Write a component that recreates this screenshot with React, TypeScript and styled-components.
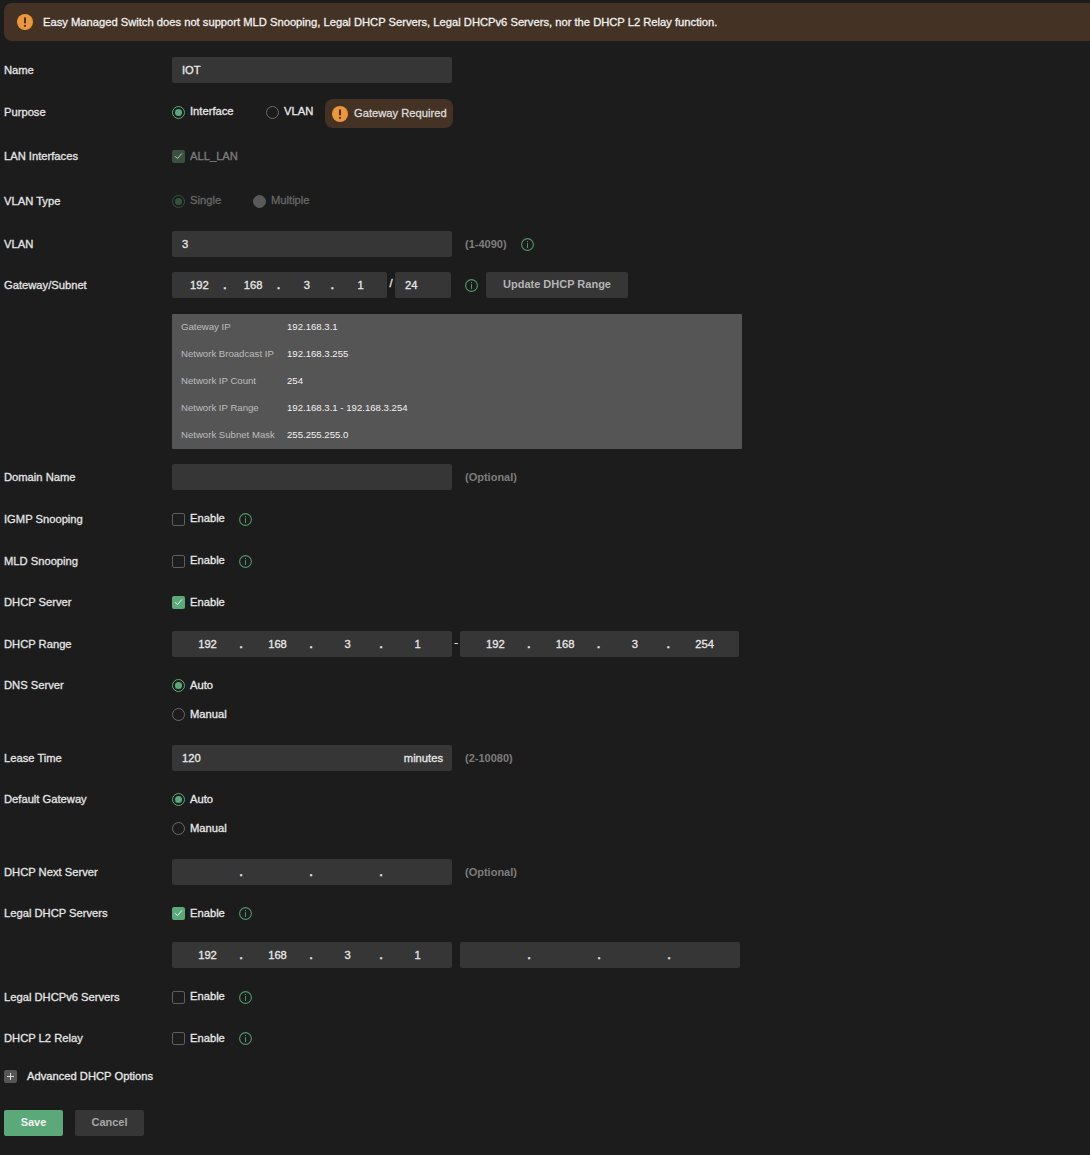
import React from "react";
import styled, { createGlobalStyle } from "styled-components";

const Global = createGlobalStyle`
  html, body { margin: 0; padding: 0; background: #1c1c1c; }
  body { font-family: "Liberation Sans", Arial, sans-serif; font-size: 11.2px; font-weight: 400; -webkit-text-stroke: 0.3px currentColor; color: #e8e8e8; overflow: hidden; }
`;

const Page = styled.div`
  width: 1090px;
  height: 1155px;
  padding: 3px 0 0 4px;
  box-sizing: border-box;
  overflow: hidden;
`;

const Banner = styled.div`
  display: flex;
  align-items: center;
  gap: 10px;
  height: 38px;
  width: 1100px;
  padding-left: 13px;
  box-sizing: border-box;
  background: #443324;
  border-radius: 8px;
  color: #f0f0f0;
  margin-bottom: 8px;
`;

const Row = styled.div<{ $h: number }>`
  display: flex;
  align-items: center;
  height: ${(p) => p.$h}px;
`;

const Label = styled.div`
  width: 168px;
  flex: none;
  color: #e4e4e4;
`;

const Controls = styled.div`
  display: flex;
  align-items: center;
`;

const TextBox = styled.div<{ $w?: number }>`
  display: flex;
  align-items: center;
  justify-content: space-between;
  width: ${(p) => p.$w ?? 280}px;
  height: 26px;
  padding: 0 9px 0 10px;
  box-sizing: border-box;
  background: #363636;
  border-radius: 2px;
  color: #e8e8e8;
`;

const IpBox = styled.div<{ $w: number }>`
  display: grid;
  grid-template-columns: 1fr 0 1fr 0 1fr 0 1fr;
  align-items: center;
  width: ${(p) => p.$w}px;
  height: 26px;
  box-sizing: border-box;
  background: #363636;
  border-radius: 2px;
  color: #e8e8e8;
`;

const Octet = styled.span`
  text-align: center;
  padding-left: 1px;
`;

const Dot = styled.span`
  width: 0;
  margin-left: -2.5px;
  font-weight: 700;
`;

const Sep = styled.span<{ $w: number }>`
  width: ${(p) => p.$w}px;
  text-align: center;
  color: #e8e8e8;
  margin-top: -4px;
`;

const Hint = styled.span<{ $ml?: number }>`
  color: #7d7d7d;
  font-size: 11px;
  font-weight: 700;
  -webkit-text-stroke: 0;
  margin-left: ${(p) => p.$ml ?? 13}px;
`;

const RadioMark = styled.span<{ $on?: boolean; $off?: boolean }>`
  display: inline-flex;
  align-items: center;
  justify-content: center;
  width: 13px;
  height: 13px;
  box-sizing: border-box;
  border-radius: 50%;
  border: 1px solid ${(p) => (p.$off ? (p.$on ? "#35523f" : "#5a5a5a") : p.$on ? "#5ba878" : "#6a6a6a")};
  background: ${(p) => (p.$off && !p.$on ? "#5a5a5a" : "transparent")};
  &::after {
    content: "";
    display: ${(p) => (p.$on ? "block" : "none")};
    width: 7px;
    height: 7px;
    border-radius: 50%;
    background: ${(p) => (p.$off ? "#35523f" : "#5ba878")};
  }
`;

const Choice = styled.span<{ $w?: number; $tone?: string }>`
  display: inline-flex;
  align-items: center;
  gap: 5px;
  width: ${(p) => (p.$w ? `${p.$w}px` : "auto")};
  color: ${(p) => p.$tone ?? "#e8e8e8"};
`;

const ChoiceText = styled.span<{ $up?: boolean }>`
  margin-bottom: ${(p) => (p.$up ? "2px" : "0")};
`;

const CheckMark = styled.span<{ $on?: boolean; $dim?: boolean }>`
  display: inline-flex;
  align-items: center;
  justify-content: center;
  width: 13px;
  height: 13px;
  box-sizing: border-box;
  border-radius: 2px;
  border: ${(p) => (p.$on ? "none" : "1px solid #5e5e5e")};
  background: ${(p) => (p.$on ? (p.$dim ? "#38523f" : "#5ba878") : "transparent")};
`;

const Pill = styled.div`
  display: flex;
  align-items: center;
  gap: 6px;
  width: 128px;
  height: 29px;
  padding: 0 0 0 7px;
  margin-top: 3px;
  box-sizing: border-box;
  background: #443324;
  border-radius: 8px;
  color: #dcdcdc;
`;

const PillText = styled.span`
  margin-bottom: 1px;
`;

const InfoWrap = styled.span<{ $ml: number }>`
  display: inline-flex;
  margin-left: ${(p) => p.$ml}px;
`;

const SmallBtn = styled.div`
  display: flex;
  align-items: center;
  justify-content: center;
  width: 142px;
  height: 26px;
  margin-left: 8px;
  padding-bottom: 2px;
  box-sizing: border-box;
  background: #363636;
  border-radius: 2px;
  color: #b4b4b4;
  font-size: 11px;
  font-weight: 700;
  -webkit-text-stroke: 0;
`;

const PanelRow = styled.div`
  padding: 9px 0 7px 168px;
`;

const Panel = styled.div`
  width: 570px;
  height: 135px;
  padding: 0 9px;
  box-sizing: border-box;
  background: #555555;
  border-radius: 1px;
  display: grid;
  grid-template-columns: 106px 1fr;
  grid-auto-rows: 27px;
  font-size: 9.6px;
  line-height: 25px;
  -webkit-text-stroke: 0;
`;

const PanelKey = styled.span`
  color: #bdbdbd;
`;

const PanelVal = styled.span`
  color: #f2f2f2;
`;

const Advanced = styled.div`
  display: flex;
  align-items: center;
  gap: 10px;
  height: 34px;
  color: #e8e8e8;
`;

const PlusBox = styled.span`
  display: inline-flex;
  align-items: center;
  justify-content: center;
  width: 13px;
  height: 13px;
  background: #555555;
  border-radius: 2px;
`;

const Actions = styled.div`
  display: flex;
  gap: 12px;
  margin-top: 17px;
`;

const Btn = styled.div<{ $primary?: boolean; $w: number }>`
  display: flex;
  align-items: center;
  justify-content: center;
  width: ${(p) => p.$w}px;
  height: 26px;
  padding-bottom: 2px;
  box-sizing: border-box;
  border-radius: 2px;
  font-size: 11px;
  font-weight: 700;
  -webkit-text-stroke: 0;
  background: ${(p) => (p.$primary ? "#5ba878" : "#363636")};
  color: ${(p) => (p.$primary ? "#f4f4f4" : "#a8a8a8")};
`;

const Warn = ({ size }: { size: number }) => (
  <svg width={size} height={size} viewBox="0 0 16 16" aria-hidden="true">
    <circle cx="8" cy="8" r="8" fill="#ec973a" />
    <rect x="7" y="3.2" width="2" height="6.4" rx="0.8" fill="#443324" />
    <circle cx="8" cy="11.8" r="1.15" fill="#443324" />
  </svg>
);

const Info = ({ ml }: { ml: number }) => (
  <InfoWrap $ml={ml}>
    <svg width="13" height="13" viewBox="0 0 13 13" fill="none" aria-hidden="true">
      <circle cx="6.5" cy="6.5" r="5.9" stroke="#4f9468" strokeWidth="1.15" />
      <rect x="6" y="3" width="1" height="1.2" fill="#4f9468" />
      <rect x="6" y="5.2" width="1" height="4.8" fill="#4f9468" />
    </svg>
  </InfoWrap>
);

const Tick = ({ color = "#f0f0f0" }: { color?: string }) => (
  <svg width="9" height="8" viewBox="0 0 9 8" fill="none" aria-hidden="true">
    <path d="M1 4.2 3.4 6.6 8 1.4" stroke={color} strokeWidth="1" />
  </svg>
);

type RadioProps = { text: string; on?: boolean; off?: boolean; w?: number; up?: boolean };

const Radio = ({ text, on, off, w, up }: RadioProps) => (
  <Choice $w={w} $tone={off ? "#686868" : undefined}>
    <RadioMark $on={on} $off={off} />
    <ChoiceText $up={up}>{text}</ChoiceText>
  </Choice>
);

type CheckProps = { text: string; on?: boolean; dim?: boolean; up?: boolean };

const Check = ({ text, on, dim, up }: CheckProps) => (
  <Choice $tone={dim ? "#7c7c7c" : undefined}>
    <CheckMark $on={on} $dim={dim}>
      {on && <Tick color={dim ? "#c4c4c4" : "#f0f0f0"} />}
    </CheckMark>
    <ChoiceText $up={up}>{text}</ChoiceText>
  </Choice>
);

const Ip = ({ w, parts = ["", "", "", ""] }: { w: number; parts?: string[] }) => (
  <IpBox $w={w}>
    <Octet>{parts[0]}</Octet>
    <Dot>.</Dot>
    <Octet>{parts[1]}</Octet>
    <Dot>.</Dot>
    <Octet>{parts[2]}</Octet>
    <Dot>.</Dot>
    <Octet>{parts[3]}</Octet>
  </IpBox>
);

const panelData = [
  ["Gateway IP", "192.168.3.1"],
  ["Network Broadcast IP", "192.168.3.255"],
  ["Network IP Count", "254"],
  ["Network IP Range", "192.168.3.1 - 192.168.3.254"],
  ["Network Subnet Mask", "255.255.255.0"],
];

export default function App() {
  return (
    <Page>
      <Global />
      <Banner>
        <Warn size={16} />
        Easy Managed Switch does not support MLD Snooping, Legal DHCP Servers, Legal DHCPv6 Servers, nor the DHCP L2 Relay function.
      </Banner>
      <Row $h={42}>
        <Label>Name</Label>
        <TextBox>IOT</TextBox>
      </Row>
      <Row $h={42}>
        <Label>Purpose</Label>
        <Controls>
          <Radio text="Interface" on w={94} up />
          <Radio text="VLAN" w={59} up />
          <Pill>
            <Warn size={16} />
            <PillText>Gateway Required</PillText>
          </Pill>
        </Controls>
      </Row>
      <Row $h={46}>
        <Label>LAN Interfaces</Label>
        <Check text="ALL_LAN" on dim />
      </Row>
      <Row $h={44}>
        <Label>VLAN Type</Label>
        <Controls>
          <Radio text="Single" on off w={81} up />
          <Radio text="Multiple" off up />
        </Controls>
      </Row>
      <Row $h={42}>
        <Label>VLAN</Label>
        <TextBox>3</TextBox>
        <Hint>(1-4090)</Hint>
        <Info ml={14} />
      </Row>
      <Row $h={40}>
        <Label>Gateway/Subnet</Label>
        <Ip w={215} parts={["192", "168", "3", "1"]} />
        <Sep $w={8}>/</Sep>
        <TextBox $w={56}>24</TextBox>
        <Info ml={14} />
        <SmallBtn>Update DHCP Range</SmallBtn>
      </Row>
      <PanelRow>
        <Panel>
          {panelData.map(([k, v]) => (
            <React.Fragment key={k}>
              <PanelKey>{k}</PanelKey>
              <PanelVal>{v}</PanelVal>
            </React.Fragment>
          ))}
        </Panel>
      </PanelRow>
      <Row $h={42}>
        <Label>Domain Name</Label>
        <TextBox />
        <Hint>(Optional)</Hint>
      </Row>
      <Row $h={42}>
        <Label>IGMP Snooping</Label>
        <Check text="Enable" up />
        <Info ml={14} />
      </Row>
      <Row $h={42}>
        <Label>MLD Snooping</Label>
        <Check text="Enable" up />
        <Info ml={14} />
      </Row>
      <Row $h={40}>
        <Label>DHCP Server</Label>
        <Check text="Enable" on />
      </Row>
      <Row $h={44}>
        <Label>DHCP Range</Label>
        <Ip w={280} parts={["192", "168", "3", "1"]} />
        <Sep $w={8}>-</Sep>
        <Ip w={279} parts={["192", "168", "3", "254"]} />
      </Row>
      <Row $h={38}>
        <Label>DNS Server</Label>
        <Radio text="Auto" on />
      </Row>
      <Row $h={20}>
        <Label />
        <Radio text="Manual" />
      </Row>
      <Row $h={68}>
        <Label>Lease Time</Label>
        <TextBox>
          <span>120</span>
          <span>minutes</span>
        </TextBox>
        <Hint>(2-10080)</Hint>
      </Row>
      <Row $h={14}>
        <Label>Default Gateway</Label>
        <Radio text="Auto" on />
      </Row>
      <Row $h={44}>
        <Label />
        <Radio text="Manual" />
      </Row>
      <Row $h={43}>
        <Label>DHCP Next Server</Label>
        <Ip w={280} />
        <Hint>(Optional)</Hint>
      </Row>
      <Row $h={40}>
        <Label>Legal DHCP Servers</Label>
        <Check text="Enable" on />
        <Info ml={14} />
      </Row>
      <Row $h={44}>
        <Label />
        <Ip w={280} parts={["192", "168", "3", "1"]} />
        <Sep $w={8} />
        <Ip w={280} />
      </Row>
      <Row $h={40}>
        <Label>Legal DHCPv6 Servers</Label>
        <Check text="Enable" up />
        <Info ml={14} />
      </Row>
      <Row $h={42}>
        <Label>DHCP L2 Relay</Label>
        <Check text="Enable" />
        <Info ml={14} />
      </Row>
      <Advanced>
        <PlusBox>
          <svg width="9" height="9" viewBox="0 0 9 9" aria-hidden="true">
            <path d="M4.5 1v7M1 4.5h7" stroke="#d8d8d8" strokeWidth="1" />
          </svg>
        </PlusBox>
        Advanced DHCP Options
      </Advanced>
      <Actions>
        <Btn $primary $w={59}>Save</Btn>
        <Btn $w={69}>Cancel</Btn>
      </Actions>
    </Page>
  );
}
